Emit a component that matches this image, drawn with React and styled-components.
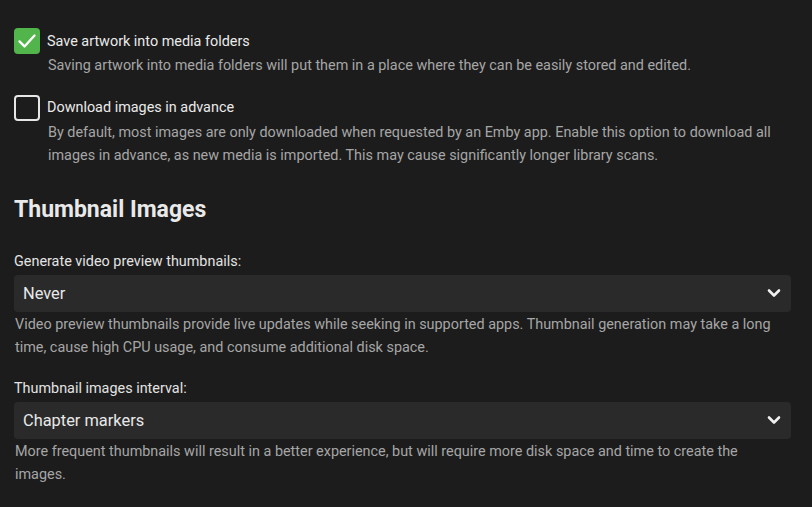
import React from 'react';
import styled, { createGlobalStyle } from 'styled-components';

const GlobalStyle = createGlobalStyle`
  html, body {
    margin: 0;
    padding: 0;
    background: #1c1c1c;
  }
  body {
    font-family: Roboto, "Liberation Sans", sans-serif;
    color: #e3e3e3;
  }
`;

const Page = styled.div`
  padding: 28px 12px 0 14px;
  width: 812px;
  box-sizing: border-box;
`;

const CheckRow = styled.label`
  display: flex;
  align-items: center;
  gap: 7px;
  height: 26px;
  font-size: 14.4px;
  color: #eaeaea;
`;

const Box = styled.span`
  width: 26px;
  height: 26px;
  box-sizing: border-box;
  border-radius: 4px;
  display: flex;
  align-items: center;
  justify-content: center;
  flex-shrink: 0;
  background: ${p => (p.checked ? '#52b54b' : 'transparent')};
  border: ${p => (p.checked ? 'none' : '2px solid #e6e6e6')};
`;

const CheckField = styled.div`
  margin-bottom: ${p => p.gap || 17}px;
`;

const Desc = styled.div`
  font-size: 14.4px;
  line-height: 23.5px;
  color: #a6a6a6;
  padding-left: ${p => p.indent || 0}px;
  margin-top: ${p => p.top || 0}px;
`;

const Heading = styled.h2`
  margin: 0;
  font-size: 23px;
  font-weight: 700;
  color: #e9e9e9;
  line-height: 28px;
  padding-top: 4px;
`;

const Field = styled.div`
  width: 777px;
  margin-top: ${p => p.top || 0}px;
`;

const Label = styled.div`
  font-size: 14.4px;
  color: #e3e3e3;
  line-height: 20px;
  margin-bottom: 3px;
`;

const Select = styled.div`
  height: 37px;
  border-radius: 4px;
  background: #2a2a2a;
  display: flex;
  align-items: center;
  justify-content: space-between;
  padding: 0 10px 0 9px;
  box-sizing: border-box;
  font-size: 16.4px;
  color: #e8e8e8;
`;

const Check = () => (
  <svg width="20" height="20" viewBox="0 0 24 24" fill="none">
    <path d="M3 12.5l6 6L21 5.5" stroke="#fff" strokeWidth="2.8" strokeLinecap="round" strokeLinejoin="round" />
  </svg>
);

const Chevron = () => (
  <svg width="14" height="10" viewBox="0 0 14 10" fill="none">
    <path d="M2 2.5l5 5 5-5" stroke="#f0f0f0" strokeWidth="2.6" strokeLinecap="round" strokeLinejoin="round" />
  </svg>
);

export default function App() {
  return (
    <>
      <GlobalStyle />
      <Page>
        <CheckField gap={17}>
          <CheckRow>
            <Box checked><Check /></Box>
            Save artwork into media folders
          </CheckRow>
          <Desc indent={34}>
            Saving artwork into media folders will put them in a place where they can be easily stored and edited.
          </Desc>
        </CheckField>
        <CheckField gap={24}>
          <CheckRow>
            <Box />
            Download images in advance
          </CheckRow>
          <Desc indent={34}>
            By default, most images are only downloaded when requested by an Emby app. Enable this option to download all images in advance, as new media is imported. This may cause significantly longer library scans.
          </Desc>
        </CheckField>
        <Heading>Thumbnail Images</Heading>
        <Field top={28}>
          <Label>Generate video preview thumbnails:</Label>
          <Select>
            Never
            <Chevron />
          </Select>
          <Desc indent={1} top={1}>
            Video preview thumbnails provide live updates while seeking in supported apps. Thumbnail generation may take a long time, cause high CPU usage, and consume additional disk space.
          </Desc>
        </Field>
        <Field top={19}>
          <Label>Thumbnail images interval:</Label>
          <Select>
            Chapter markers
            <Chevron />
          </Select>
          <Desc indent={1} top={1}>
            More frequent thumbnails will result in a better experience, but will require more disk space and time to create the images.
          </Desc>
        </Field>
      </Page>
    </>
  );
}
